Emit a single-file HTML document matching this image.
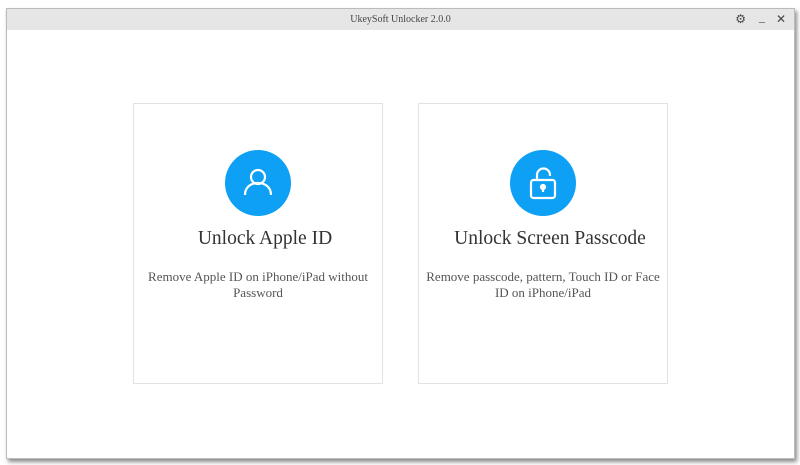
<!DOCTYPE html>
<html><head><style>
body{margin:0;width:800px;height:465px;background:#fff;position:relative;overflow:hidden;font-family:"Liberation Serif",serif}
.win{position:absolute;left:6px;top:8px;width:787px;height:449px;background:#fff;border:1px solid #bbb;box-shadow:2px 3px 4px rgba(0,0,0,.45)}
.tb{position:absolute;left:0;top:0;right:0;height:21px;background:#e6e6e6;text-align:center;font-size:10px;line-height:21px;color:#444}
.card{position:absolute;top:94px;width:248px;height:279px;border:1px solid #e2e2e2;text-align:center}
.circ{position:absolute;left:91px;top:46px;width:66px;height:66px;border-radius:50%;background:#0ea0f5}
.t{position:absolute;left:14px;right:0;top:124px;font-size:19.5px;color:#333;white-space:nowrap}
.d{position:absolute;left:4px;right:4px;top:165px;font-size:13px;line-height:16px;color:#555}
</style></head><body>
<div class="win">
<div class="tb">UkeySoft Unlocker 2.0.0
<span style="position:absolute;right:48px;top:0;font-size:12px">⚙</span>
<span style="position:absolute;right:29px;top:-2px;font-size:12px">_</span>
<span style="position:absolute;right:8px;top:0;font-size:12px;font-family:'Liberation Sans'">✕</span></div>
<div class="card" style="left:126px">
<div class="circ"><svg width="66" height="66" viewBox="0 0 66 66" fill="none" stroke="#fff" stroke-width="2.2"><circle cx="33" cy="27" r="7"/><path d="M20 45c0-8 6-12 13-12s13 4 13 12"/></svg></div>
<div class="t">Unlock Apple ID</div>
<div class="d">Remove Apple ID on iPhone/iPad without Password</div></div>
<div class="card" style="left:411px">
<div class="circ"><svg width="66" height="66" viewBox="0 0 66 66" fill="none" stroke="#fff" stroke-width="2.2"><path d="M27 30v-5a6.5 6.5 0 0 1 13 0v1"/><rect x="21" y="30" width="24" height="18" rx="2.5"/><circle cx="33" cy="37" r="2" fill="#fff"/><path d="M33 38v4"/></svg></div>
<div class="t">Unlock Screen Passcode</div>
<div class="d">Remove passcode, pattern, Touch ID or Face ID on iPhone/iPad</div></div>
</div>
</body></html>
